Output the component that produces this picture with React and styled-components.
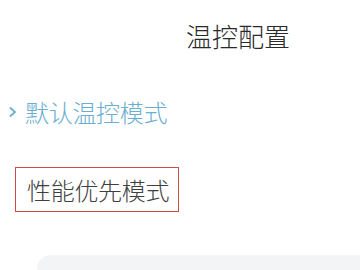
import styled, { createGlobalStyle } from "styled-components";

const GlobalStyle = createGlobalStyle`
  html, body {
    margin: 0;
    padding: 0;
    background: #ffffff;
  }
`;

const Screen = styled.div`
  width: 360px;
  height: 270px;
  overflow: hidden;
  display: flex;
  flex-direction: column;
  background: #ffffff;
  font-family: "Noto Sans CJK SC", "Noto Sans", sans-serif;
  font-weight: 300;
`;

const Title = styled.h1`
  margin: 19px 0 0 186px;
  font-size: 26px;
  font-weight: 300;
  line-height: 34px;
  color: #2a2a2a;
  letter-spacing: 0;
`;

const ModeList = styled.div`
  display: flex;
  flex-direction: column;
  margin-top: 42px;
`;

const ModeRow = styled.div`
  display: flex;
  align-items: center;
  height: 34px;
  padding-left: ${(p) => (p.$active ? "8px" : "15px")};
  color: ${(p) => (p.$active ? "#6aaed0" : "#3f3f3f")};
`;

const Chevron = styled.svg`
  width: 9px;
  height: 12px;
  margin-right: 8px;
  flex: none;
`;

const ModeLabel = styled.span`
  font-size: 24px;
  line-height: 32px;
  letter-spacing: -0.3px;
  white-space: nowrap;
`;

const FocusBox = styled.div`
  display: flex;
  align-items: center;
  width: 164px;
  height: 45px;
  box-sizing: border-box;
  margin: 38px 0 0 15px;
  padding-left: 11px;
  border: 1px solid #cf4a4a;
  color: #3f3f3f;
`;

const BottomPanel = styled.div`
  margin: 43px 0 0 37px;
  flex: 1;
  background: #f3f4f5;
  border-top-left-radius: 14px;
`;

export default function App() {
  return (
    <>
      <GlobalStyle />
      <Screen>
        <Title>温控配置</Title>
        <ModeList>
          <ModeRow $active>
            <Chevron viewBox="0 0 9 12">
              <path d="M2 1.5 L7 6 L2 10.5" fill="none" stroke="#6aaed0" strokeWidth="1.8" />
            </Chevron>
            <ModeLabel>默认温控模式</ModeLabel>
          </ModeRow>
        </ModeList>
        <FocusBox>
          <ModeLabel>性能优先模式</ModeLabel>
        </FocusBox>
        <BottomPanel />
      </Screen>
    </>
  );
}
